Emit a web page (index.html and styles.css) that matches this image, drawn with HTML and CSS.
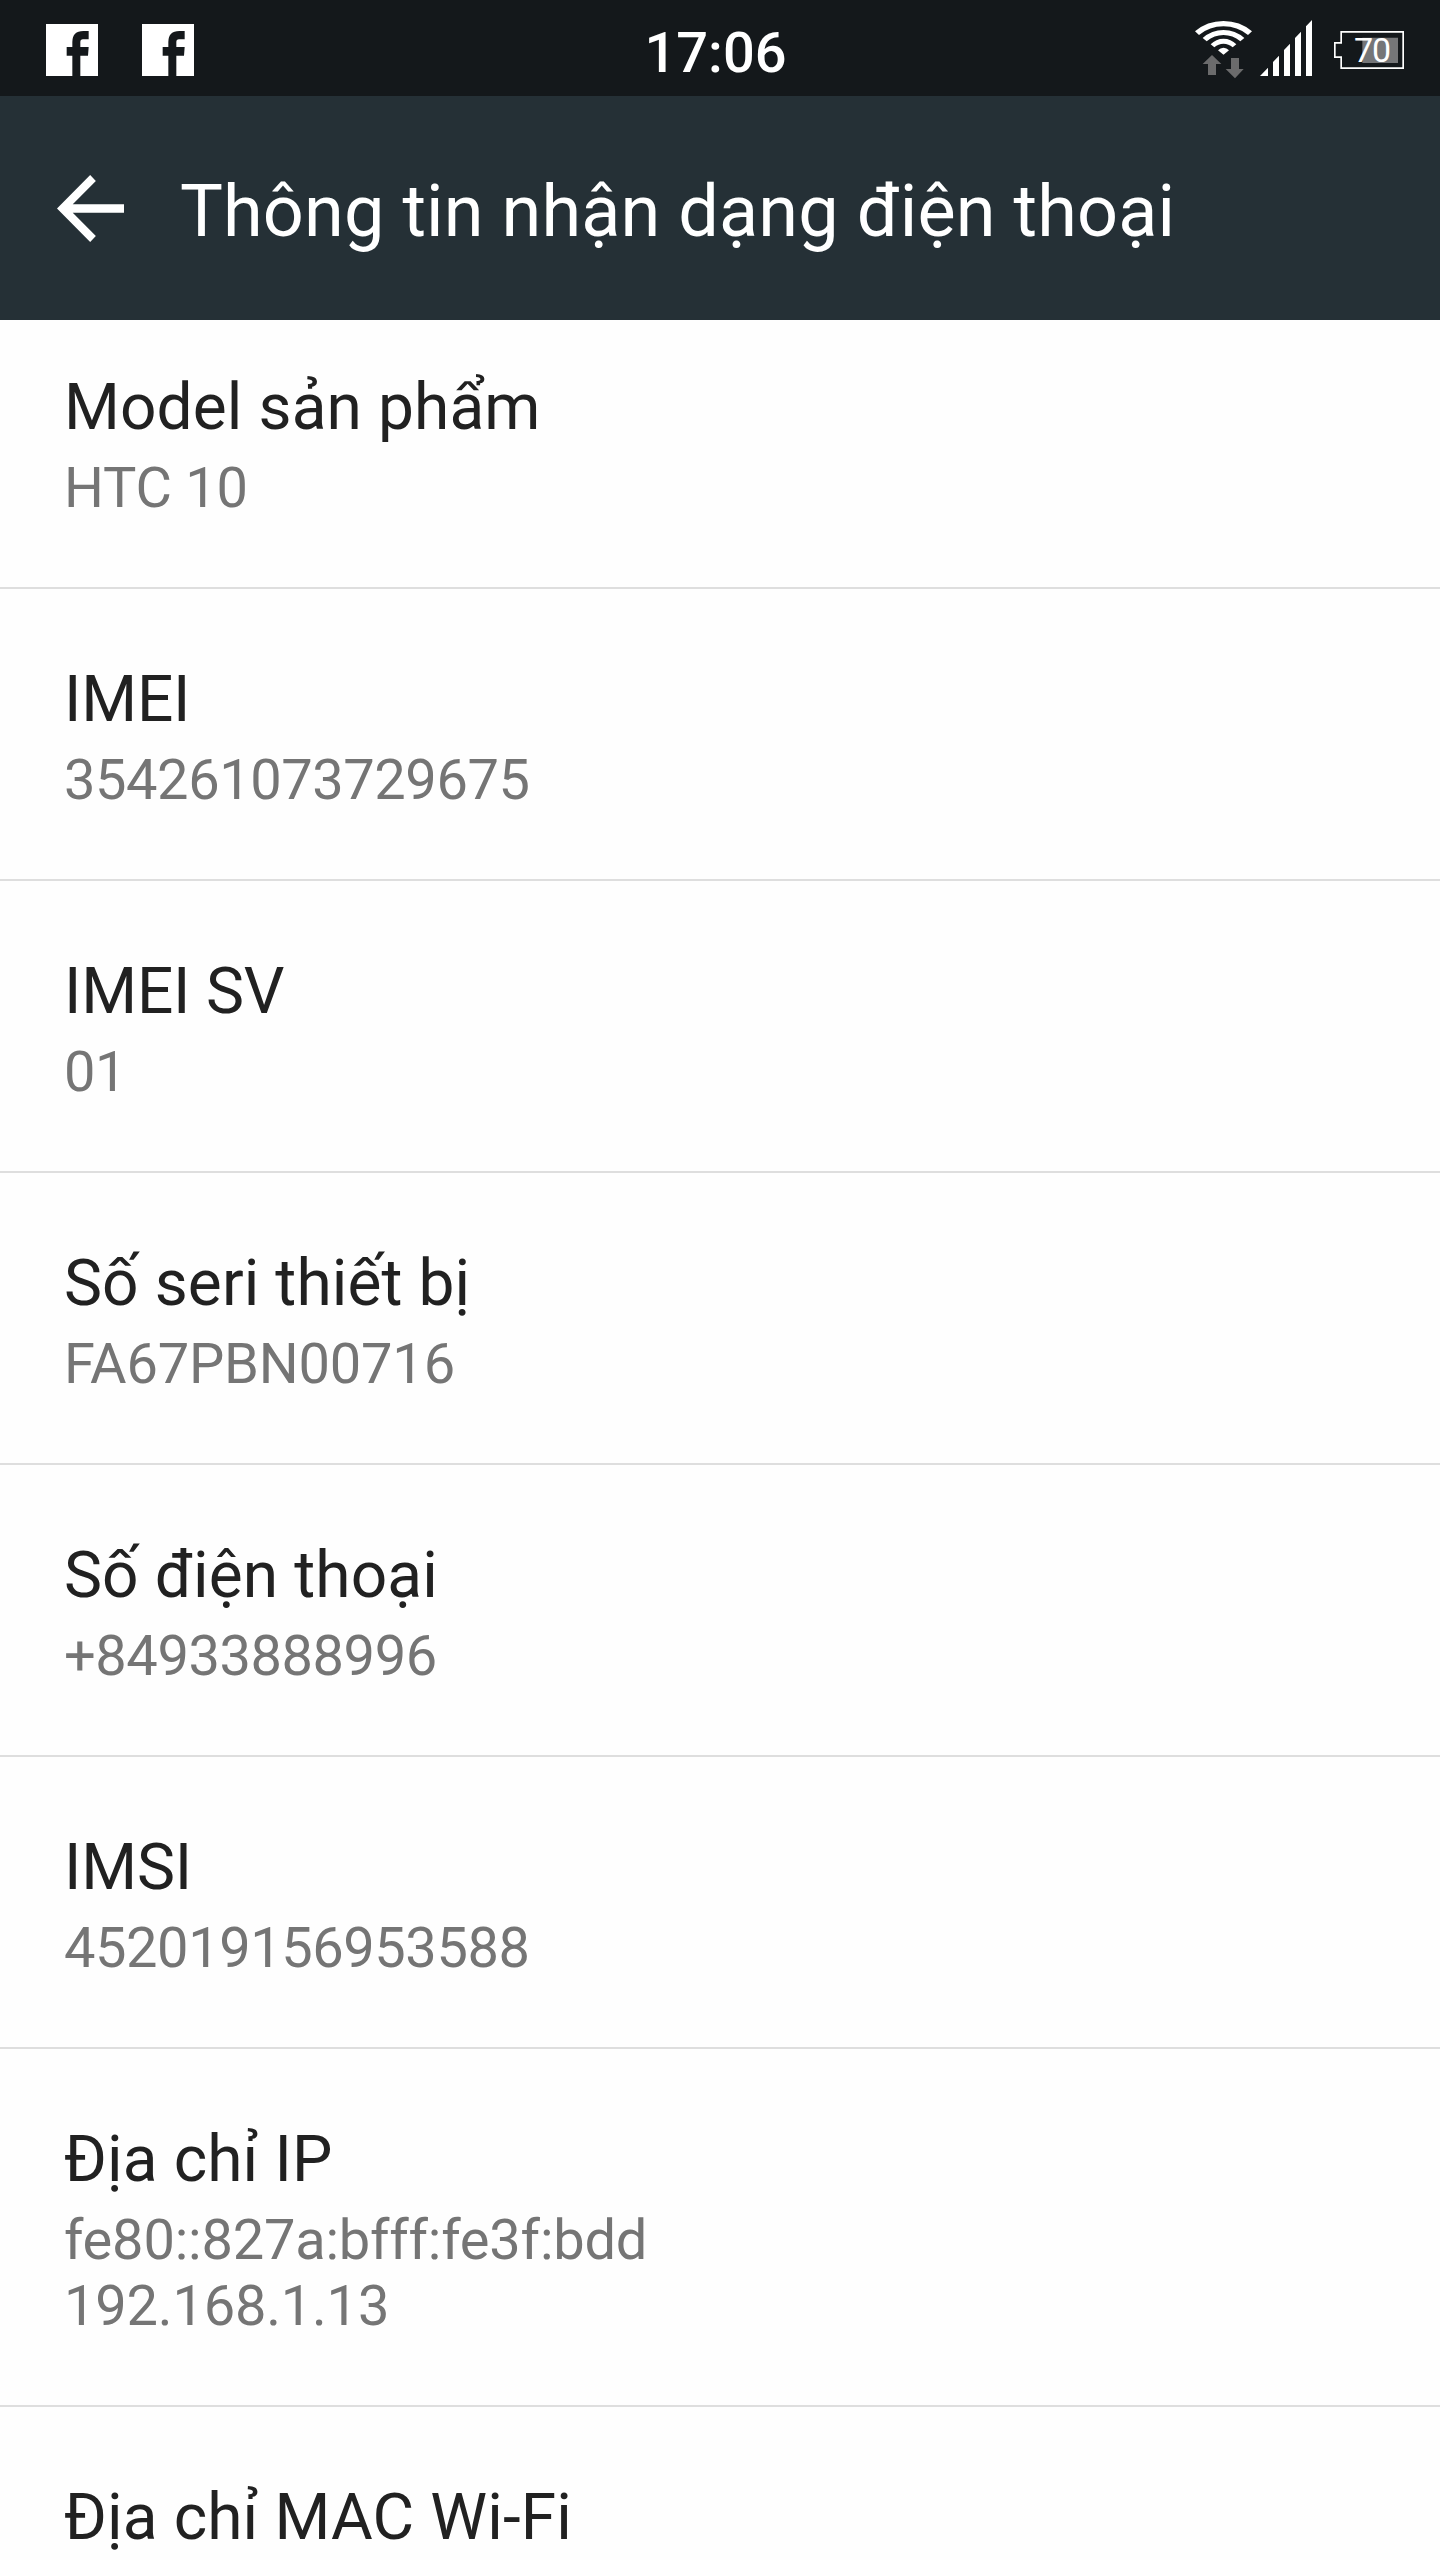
FILE: index.html
```html
<!DOCTYPE html>
<html lang="vi">
<head>
<meta charset="utf-8">
<title>Thông tin nhận dạng điện thoại</title>
<link rel="stylesheet" href="styles.css">
</head>
<body>
<div class="status-bar">
  <div class="notifications">
    <svg class="fb" viewBox="0 0 156 156"><path fill="#fff" d="M0 0H156V156H103V95H126L128 69H103V54Q103 46 111 46H128V21H112Q79 21 79 54V69H62V95H79V156H0Z"/></svg>
    <svg class="fb" viewBox="0 0 156 156"><path fill="#fff" d="M0 0H156V156H103V95H126L128 69H103V54Q103 46 111 46H128V21H112Q79 21 79 54V69H62V95H79V156H0Z"/></svg>
  </div>
  <div class="clock">17:06</div>
  <div class="system">
    <svg class="wifi" viewBox="45 60 171 177">
      <g fill="#fff">
        <path d="M45 94Q81 63 130.500 63Q180 63 216 94L204 105Q172 79 130.500 79Q89 79 57 105Z"/>
        <path d="M68 114Q95 90 130.500 90Q166 90 193 114L181 124Q158 105 130.500 105Q103 105 80 124Z"/>
        <path d="M92 133Q108 116 130.500 116Q153 116 169 133L158 142Q146 131 130.500 131Q115 131 103 142Z"/>
        <path d="M114 151Q121 143 130.500 143Q140 143 147 151L130.500 164Z"/>
      </g>
      <g fill="#6b6b6c">
        <path d="M96 165L124 192H108V225H84V192H68Z"/>
        <path d="M153 174H177V207H191L165 235L137 207H153Z"/>
      </g>
    </svg>
    <svg class="signal" viewBox="240 60 156 168"><path fill="#fff" d="M240 228L264 203V228ZM279 228V186L297 167V228ZM312 228V150L330 131V228ZM345 228V114L363 95V228ZM378 228V79L396 60V228Z"/></svg>
    <div class="battery">
      <svg class="battery-shape" viewBox="462 93 210 114"><path fill="#757678" d="M547 113H654V189H547Z"/><path fill="none" stroke="#fff" stroke-width="5" d="M483.500 95.500H669.500V204.500H483.500V171.500H464.500V128.500H483.500Z"/></svg>
      <span class="level">70</span>
    </div>
  </div>
</div>
<header class="toolbar">
  <svg class="back" viewBox="0 0 200 200"><path fill="#fff" d="M99 0L116 18L47 87H200V113H47L116 182L99 200L0 100Z"/></svg>
  <h1 class="title">Thông tin nhận dạng điện thoại</h1>
</header>
<main class="list">
  <section class="item item-first"><h2 class="label">Model sản phẩm</h2><p class="value">HTC 10</p></section>
  <section class="item"><h2 class="label label-caps">IMEI</h2><p class="value value-digits">354261073729675</p></section>
  <section class="item"><h2 class="label label-caps">IMEI SV</h2><p class="value value-digits">01</p></section>
  <section class="item"><h2 class="label">Số seri thiết bị</h2><p class="value">FA67PBN00716</p></section>
  <section class="item"><h2 class="label">Số điện thoại</h2><p class="value value-digits">+84933888996</p></section>
  <section class="item"><h2 class="label label-caps">IMSI</h2><p class="value value-digits">452019156953588</p></section>
  <section class="item"><h2 class="label">Địa chỉ IP</h2><p class="value">fe80::827a:bfff:fe3f:bdd<br>192.168.1.13</p></section>
  <section class="item"><h2 class="label">Địa chỉ MAC Wi-Fi</h2></section>
</main>
</body>
</html>
```
FILE: styles.css
```css
* { box-sizing: border-box; }
body {
  margin: 0;
  width: 1440px;
  height: 2560px;
  overflow: hidden;
  display: flex;
  flex-direction: column;
  background: #fefefe;
  font-family: Roboto, "Noto Sans", sans-serif;
}
h1, h2, p { margin: 0; font-weight: 400; }
svg { display: block; flex: none; }

.status-bar {
  flex: none;
  height: 96px;
  display: grid;
  grid-template-columns: 1fr auto 1fr;
  background: #14181b;
  color: #fff;
}
.notifications { display: flex; gap: 44px; padding: 24px 0 0 46px; }
.fb { width: 52px; height: 52px; }
.clock { font-size: 56px; font-weight: 500; line-height: 66px; padding-top: 20px; margin: 0 3px 0 -6px; }
.system { display: flex; justify-content: flex-end; padding: 20px 36px 0 0; }
.wifi { width: 57px; height: 59px; }
.signal { width: 52px; height: 56px; margin-left: 8px; }
.battery { display: grid; width: 70px; height: 38px; margin: 11px 0 0 22px; }
.battery-shape { grid-area: 1 / 1; width: 70px; height: 38px; }
.level { grid-area: 1 / 1; font-size: 34px; line-height: 39px; letter-spacing: -1px; padding-left: 20px; z-index: 1; }

.toolbar {
  flex: none;
  height: 224px;
  display: flex;
  align-items: flex-start;
  background: #253036;
  color: #fff;
}
.back { width: 67px; height: 67px; margin: 78.500px 0 0 57px; }
.title { font-size: 72px; line-height: 84px; letter-spacing: 0.11px; margin: 74px 0 0 56px; white-space: nowrap; }

.list { flex: 1; min-height: 0; overflow: hidden; }
.item { padding: 73px 64px 66px; border-bottom: 2px solid #dedede; }
.item-first { padding-top: 50px; }
.label { font-size: 64px; line-height: 76px; letter-spacing: 0.11px; color: #212121; }
.label-caps { letter-spacing: -0.2px; }
.value { font-size: 56px; line-height: 66px; letter-spacing: -0.2px; margin-top: 9px; color: #757575; }
.value-digits { letter-spacing: -0.44px; }
```
